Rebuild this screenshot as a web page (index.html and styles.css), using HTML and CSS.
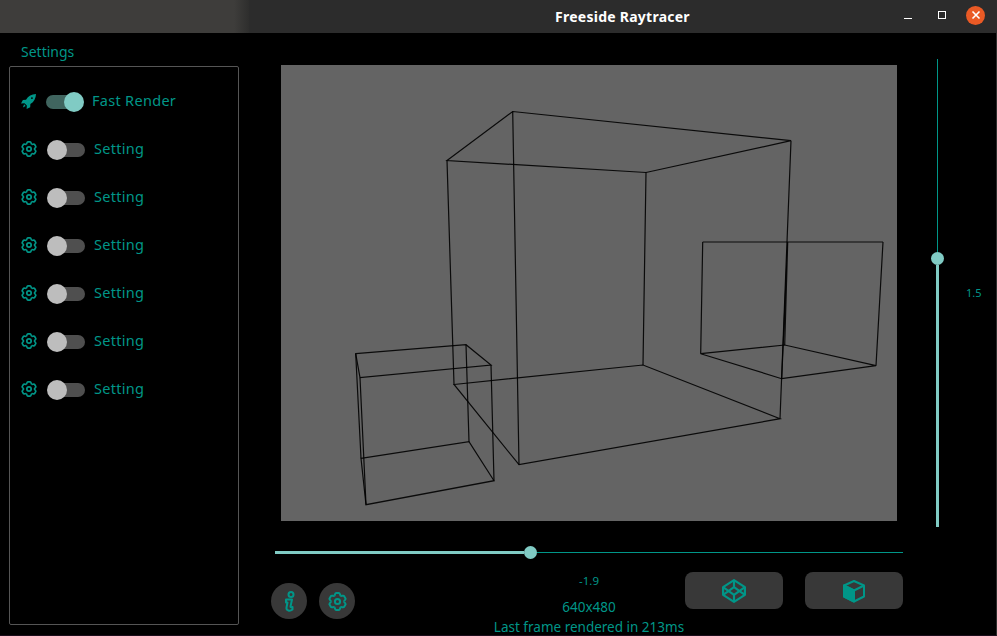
FILE: index.html
```html
<!DOCTYPE html>
<html lang="en">
<head>
    <meta charset="UTF-8">
    <meta name="viewport" content="width=device-width, initial-scale=1.0">
    <title>Freeside Raytracer</title>
    <link rel="stylesheet" href="styles.css">
</head>
<body>
    <svg class="defs" width="0" height="0" aria-hidden="true">
        <symbol id="gear" viewBox="1 1 22 22">
            <g fill="none" stroke="currentColor" stroke-width="2.300">
                <circle cx="12" cy="12" r="3"/>
                <path id="lobe" d="M8.250 5.500C9.100 5 9 2.200 10.500 2.200H13.500C15 2.200 14.900 5 15.750 5.500"/>
                <use href="#lobe" transform="rotate(60 12 12)"/>
                <use href="#lobe" transform="rotate(120 12 12)"/>
                <use href="#lobe" transform="rotate(180 12 12)"/>
                <use href="#lobe" transform="rotate(240 12 12)"/>
                <use href="#lobe" transform="rotate(300 12 12)"/>
            </g>
        </symbol>
    </svg>

    <div class="app">
        <header class="titlebar">
            <div class="titlebar-behind"></div>
            <div class="titlebar-main">
                <span></span>
                <span class="title">Freeside Raytracer</span>
                <div class="window-btns">
                    <span class="win-min"></span>
                    <span class="win-max"></span>
                    <span class="win-close">
                        <svg width="10" height="10" viewBox="0 0 10 10"><path d="M1.500 1.500L8.500 8.500M8.500 1.500L1.500 8.500" stroke="#fff" stroke-width="1.600"/></svg>
                    </span>
                </div>
            </div>
        </header>

        <main class="content">
            <aside class="sidebar">
                <div class="sidebar-label">Settings</div>
                <div class="panel">
                    <div class="row row-on">
                        <svg class="icon rocket" viewBox="0 0 24 24" fill="currentColor">
                            <path fill-rule="evenodd" d="M24 0C17 .3 11.500 3 8 9L3 9.500 0 15 5.500 14.800 9.300 18.500 9 24 14.700 21 15 16C21 12.500 23.700 7 24 0ZM17.500 5A1.500 1.500 0 1 0 19 6.500 1.500 1.500 0 0 0 17.500 5Z"/>
                            <path d="M5 16.500L7.500 19 3 21.500Z"/>
                        </svg>
                        <span class="switch on"><span class="knob"></span></span>
                        <span class="row-label">Fast Render</span>
                    </div>
                    <div class="row">
                        <svg class="icon"><use href="#gear"/></svg>
                        <span class="switch"><span class="knob"></span></span>
                        <span class="row-label">Setting</span>
                    </div>
                    <div class="row">
                        <svg class="icon"><use href="#gear"/></svg>
                        <span class="switch"><span class="knob"></span></span>
                        <span class="row-label">Setting</span>
                    </div>
                    <div class="row">
                        <svg class="icon"><use href="#gear"/></svg>
                        <span class="switch"><span class="knob"></span></span>
                        <span class="row-label">Setting</span>
                    </div>
                    <div class="row">
                        <svg class="icon"><use href="#gear"/></svg>
                        <span class="switch"><span class="knob"></span></span>
                        <span class="row-label">Setting</span>
                    </div>
                    <div class="row">
                        <svg class="icon"><use href="#gear"/></svg>
                        <span class="switch"><span class="knob"></span></span>
                        <span class="row-label">Setting</span>
                    </div>
                    <div class="row">
                        <svg class="icon"><use href="#gear"/></svg>
                        <span class="switch"><span class="knob"></span></span>
                        <span class="row-label">Setting</span>
                    </div>
                </div>
            </aside>

            <section class="view">
                <div class="stage">
                    <svg class="render" viewBox="281 65 616 456">
                        <!-- big room -->
                        <path d="M447 160.500L512.700 111.500 791 140.700 646 172.500ZM454 384.500L643 365 780 418.700 519 464.700Z"/>
                        <path d="M447 160.500L454 384.500M512.700 111.500L519 464.700M791 140.700L780 418.700M646 172.500L643 365"/>
                        <!-- left box -->
                        <path d="M355.700 353.700L466 344.700 491 365 360 377.700ZM361 458.300L469 441.700 494 480.700 366 504.700Z"/>
                        <path d="M355.700 353.700L361 458.300M466 344.700L469 441.700M491 365L494 480.700M360 377.700L366 504.700"/>
                        <!-- right box -->
                        <path d="M702.700 242H883M702.700 242L700.700 353.700M883 242L876 365.700M787.700 242L781.700 378.700M787.700 242L784.700 345"/>
                        <path d="M700.700 353.700L784.700 345 876 365.700 781.700 378.700Z"/>
                    </svg>
                    <div class="vslider">
                        <span class="vtrack-thin"></span>
                        <span class="thumb"></span>
                        <span class="vtrack-thick"></span>
                    </div>
                    <span class="vvalue">1.5</span>
                </div>

                <div class="hslider">
                    <span class="htrack-thick"></span>
                    <span class="thumb"></span>
                    <span class="htrack-thin"></span>
                </div>

                <div class="controls">
                    <div class="round-btns">
                        <button class="round-btn" type="button">
                            <svg width="24" height="24" viewBox="0 0 24 24" fill="none" stroke="currentColor" stroke-width="2" stroke-linejoin="round">
                                <circle cx="14" cy="5.500" r="2.500"/>
                                <path d="M9 10.500H15L13.500 17.500C13.400 18.500 14.500 18.500 15.500 18L15.500 20.500C13 22.500 9 22 9.500 18.500L10.500 13.500H9Z"/>
                            </svg>
                        </button>
                        <button class="round-btn" type="button">
                            <svg width="19" height="19"><use href="#gear"/></svg>
                        </button>
                    </div>
                    <div class="readout">
                        <div class="readout-small">-1.9</div>
                        <div class="readout-size">640x480</div>
                        <div class="readout-time">Last frame rendered in 213ms</div>
                    </div>
                    <div class="rect-btns">
                        <button class="rect-btn" type="button">
                            <svg width="24" height="24" viewBox="1 1 22 22" fill="none" stroke="currentColor" stroke-width="2" stroke-linejoin="round">
                                <path d="M12 2L22 8.500V15.500L12 22 2 15.500V8.500Z"/>
                                <path d="M12 22V15.500M22 8.500L12 15.500 2 8.500M2 15.500L12 8.500 22 15.500M12 2V8.500"/>
                            </svg>
                        </button>
                        <button class="rect-btn" type="button">
                            <svg width="24" height="24" viewBox="0 0 24 24" fill="none" stroke="currentColor" stroke-width="2" stroke-linejoin="round">
                                <path d="M12 2L22 6.500V17.500L12 22.500 2 17.500V6.500Z"/>
                                <path d="M2 6.500L12 11.500 22 6.500M12 11.500V22.500"/>
                                <path fill="currentColor" d="M2 6.500L12 11.500V22.500L2 17.500Z"/>
                            </svg>
                        </button>
                    </div>
                </div>
            </section>
        </main>
    </div>
</body>
</html>
```

FILE: styles.css
```css
* {
    box-sizing: border-box;
}

html,
body {
    margin: 0;
    padding: 0;
    height: 100%;
    background: #000;
    overflow: hidden;
}

body {
    font-family: "Noto Sans", Arial, sans-serif;
    color: #009688;
}

.defs {
    display: block;
    height: 0;
}

.app {
    display: flex;
    flex-direction: column;
    height: 636px;
    border-right: 1px solid #2e2e2e;
    border-bottom: 1px solid #1b0d1b;
}

/* title bar */
.titlebar {
    display: flex;
    flex: 0 0 33px;
}

.titlebar-behind {
    flex: 0 0 249px;
    background: linear-gradient(to right, #3e3d3b 94%, #2e2e2d 100%);
}

.titlebar-main {
    flex: 1;
    display: grid;
    grid-template-columns: 1fr auto 1fr;
    align-items: center;
    background: #2c2c2c;
}

.title {
    color: #fff;
    font-size: 14px;
    font-weight: 700;
    letter-spacing: .25px;
}

.window-btns {
    display: flex;
    align-items: center;
    justify-content: flex-end;
    height: 100%;
    padding-right: 11px;
}

.win-min {
    width: 8px;
    height: 1px;
    margin-top: 4px;
    background: #fff;
}

.win-max {
    width: 8px;
    height: 8px;
    margin-left: 26px;
    margin-top: -3px;
    border: 1px solid #fff;
}

.win-close {
    display: flex;
    align-items: center;
    justify-content: center;
    width: 19px;
    height: 19px;
    margin-left: 20px;
    margin-top: -3px;
    border-radius: 50%;
    background: #ea5a25;
}

/* main */
.content {
    flex: 1;
    display: flex;
    min-height: 0;
}

.sidebar {
    flex: 0 0 249px;
    display: flex;
    flex-direction: column;
    padding: 9px 10px 10px 9px;
}

.sidebar-label {
    height: 24px;
    padding-left: 12px;
    font-size: 14px;
    line-height: 19px;
}

.panel {
    flex: 1;
    padding: 10px 0 0 11px;
    border: 1px solid #555;
    border-radius: 2px;
}

.row {
    display: flex;
    align-items: center;
    height: 48px;
}

.icon {
    flex: 0 0 16px;
    width: 16px;
    height: 16px;
    margin-right: 10px;
}

.rocket {
    flex-basis: 15px;
    width: 15px;
    height: 15px;
}

.row-label {
    margin-left: 9px;
    margin-bottom: 2px;
    font-size: 14.5px;
    letter-spacing: .3px;
}

.row-on .row-label {
    margin-left: 8px;
}

/* switches */
.switch {
    position: relative;
    display: block;
    width: 38px;
    height: 14px;
    margin-top: 1px;
}

.switch::before {
    content: "";
    position: absolute;
    top: 0;
    left: 2px;
    right: 0;
    bottom: 0;
    border-radius: 7px;
    background: #4f4f4f;
}

.knob {
    position: absolute;
    top: -3px;
    left: 0;
    width: 20px;
    height: 20px;
    border-radius: 50%;
    background: #bdbdbd;
}

.switch.on::before {
    left: 0;
    right: 4px;
    background: #40655f;
}

.switch.on .knob {
    left: 18px;
    background: #80cbc4;
}

/* centre */
.view {
    flex: 1;
    display: flex;
    flex-direction: column;
    padding-left: 22px;
}

.stage {
    flex: 0 0 513px;
    display: flex;
    align-items: flex-start;
    padding-left: 10px;
}

.render {
    display: block;
    width: 616px;
    height: 456px;
    margin-top: 32px;
    background: #646464;
}

.render path {
    fill: none;
    stroke: #000;
    stroke-width: 1.200;
    stroke-opacity: .9;
}

.thumb {
    flex: 0 0 13px;
    width: 13px;
    height: 13px;
    border-radius: 50%;
    background: #80cbc4;
}

.vslider {
    display: flex;
    flex-direction: column;
    align-items: center;
    width: 13px;
    height: 468px;
    margin-top: 26px;
    margin-left: 34px;
}

.vtrack-thin {
    width: 1px;
    height: 193px;
    background: #009688;
}

.vtrack-thick {
    flex: 1;
    width: 3px;
    background: #80cbc4;
}

.vvalue {
    margin-top: 252px;
    margin-left: 22px;
    font-size: 11px;
    line-height: 16px;
}

.hslider {
    flex: 0 0 13px;
    display: flex;
    align-items: center;
    width: 628px;
    margin-left: 4px;
}

.htrack-thick {
    width: 249px;
    height: 3px;
    background: #80cbc4;
}

.htrack-thin {
    flex: 1;
    height: 1px;
    background: #009688;
}

.controls {
    flex: 0 0 auto;
    display: flex;
    align-items: flex-start;
    width: 632px;
    margin-top: 13px;
}

.round-btns {
    display: flex;
    gap: 12px;
    margin-top: 11px;
}

.round-btn {
    display: flex;
    align-items: center;
    justify-content: center;
    width: 36px;
    height: 36px;
    padding: 0;
    border: none;
    border-radius: 50%;
    background: #383838;
    color: #009688;
}

.readout {
    width: 192px;
    margin-left: auto;
    text-align: center;
    white-space: nowrap;
}

.readout-small {
    height: 26px;
    font-size: 11.5px;
    line-height: 18px;
}

.readout-size {
    height: 20px;
    font-size: 13.5px;
    line-height: 18px;
}

.readout-time {
    font-size: 13.5px;
    line-height: 18px;
}

.rect-btns {
    display: flex;
    gap: 22px;
}

.rect-btn {
    display: flex;
    align-items: center;
    justify-content: center;
    width: 98px;
    height: 37px;
    padding: 0;
    border: none;
    border-radius: 8px;
    background: #383838;
    color: #009688;
}
```
